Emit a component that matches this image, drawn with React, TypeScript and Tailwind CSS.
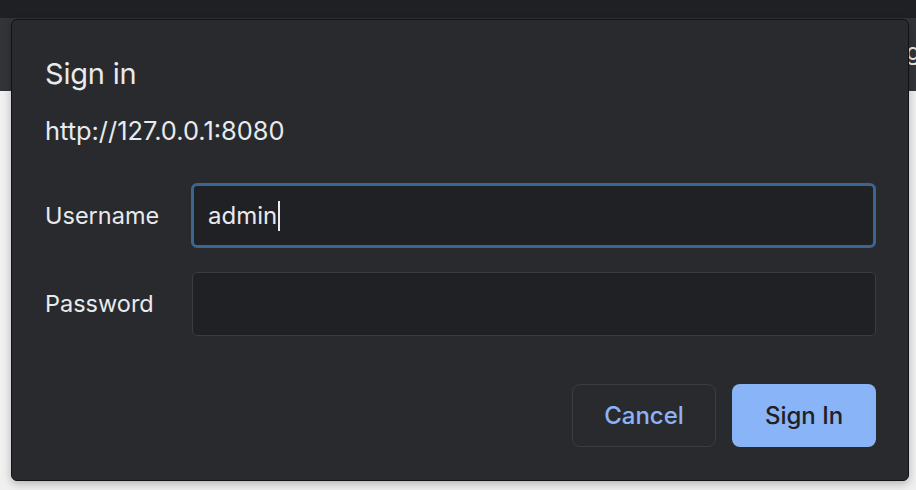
import React from "react";

const font = { fontFamily: "Inter, 'Noto Sans', sans-serif" };

const App = () => {
  return (
    <div className="relative w-[916px] h-[490px] overflow-hidden bg-[#f0f0f0]" style={font}>
      {/* page behind the dialog */}
      <div className="h-[18px] bg-[#1f2023]" />
      <div className="relative h-[73px] bg-[#333438]">
        <span className="absolute left-[906px] top-[22px] text-[24px] leading-none text-[#e8eaed]">g</span>
      </div>

      {/* auth dialog */}
      <div className="absolute left-[11px] top-[19px] w-[898px] h-[462px] rounded-[6px] border border-[#111214] bg-[#292a2d] shadow-[0_3px_8px_rgba(0,0,0,0.25)] flex flex-col pl-[33px] pr-[32px]">
        <h1 className="mt-[36px] text-[29px] leading-[36px] text-[#e8eaed] tracking-[-0.2px]">Sign in</h1>
        <p className="mt-[24px] text-[25.4px] leading-[30px] text-[#e8eaed]">http://127.0.0.1:8080</p>

        <div className="mt-[37px] flex items-center">
          <label className="w-[146px] text-[23.5px] text-[#e8eaed]">Username</label>
          <div className="flex-1 h-[65px] rounded-[6px] border-[3px] border-[#3a6690] bg-[#202124] flex items-center pl-[14px]">
            <span className="text-[24px] text-[#e8eaed]">admin</span>
            <span className="ml-[1px] w-[2px] h-[30px] bg-[#e8eaed]" />
          </div>
        </div>

        <div className="mt-[24px] flex items-center">
          <label className="w-[147px] text-[23.5px] text-[#e8eaed]">Password</label>
          <div className="flex-1 h-[64px] rounded-[5px] border border-[#3c3d41] bg-[#202124]" />
        </div>

        <div className="mt-[48px] flex justify-end gap-[16px]">
          <button className="w-[144px] h-[63px] rounded-[8px] border border-[#3c3d41] bg-transparent text-[24px] font-medium text-[#8ab4f8]">
            Cancel
          </button>
          <button className="w-[144px] h-[63px] rounded-[8px] bg-[#8ab4f8] text-[24px] font-medium text-[#202124]">
            Sign In
          </button>
        </div>
      </div>
    </div>
  );
};

export default App;
